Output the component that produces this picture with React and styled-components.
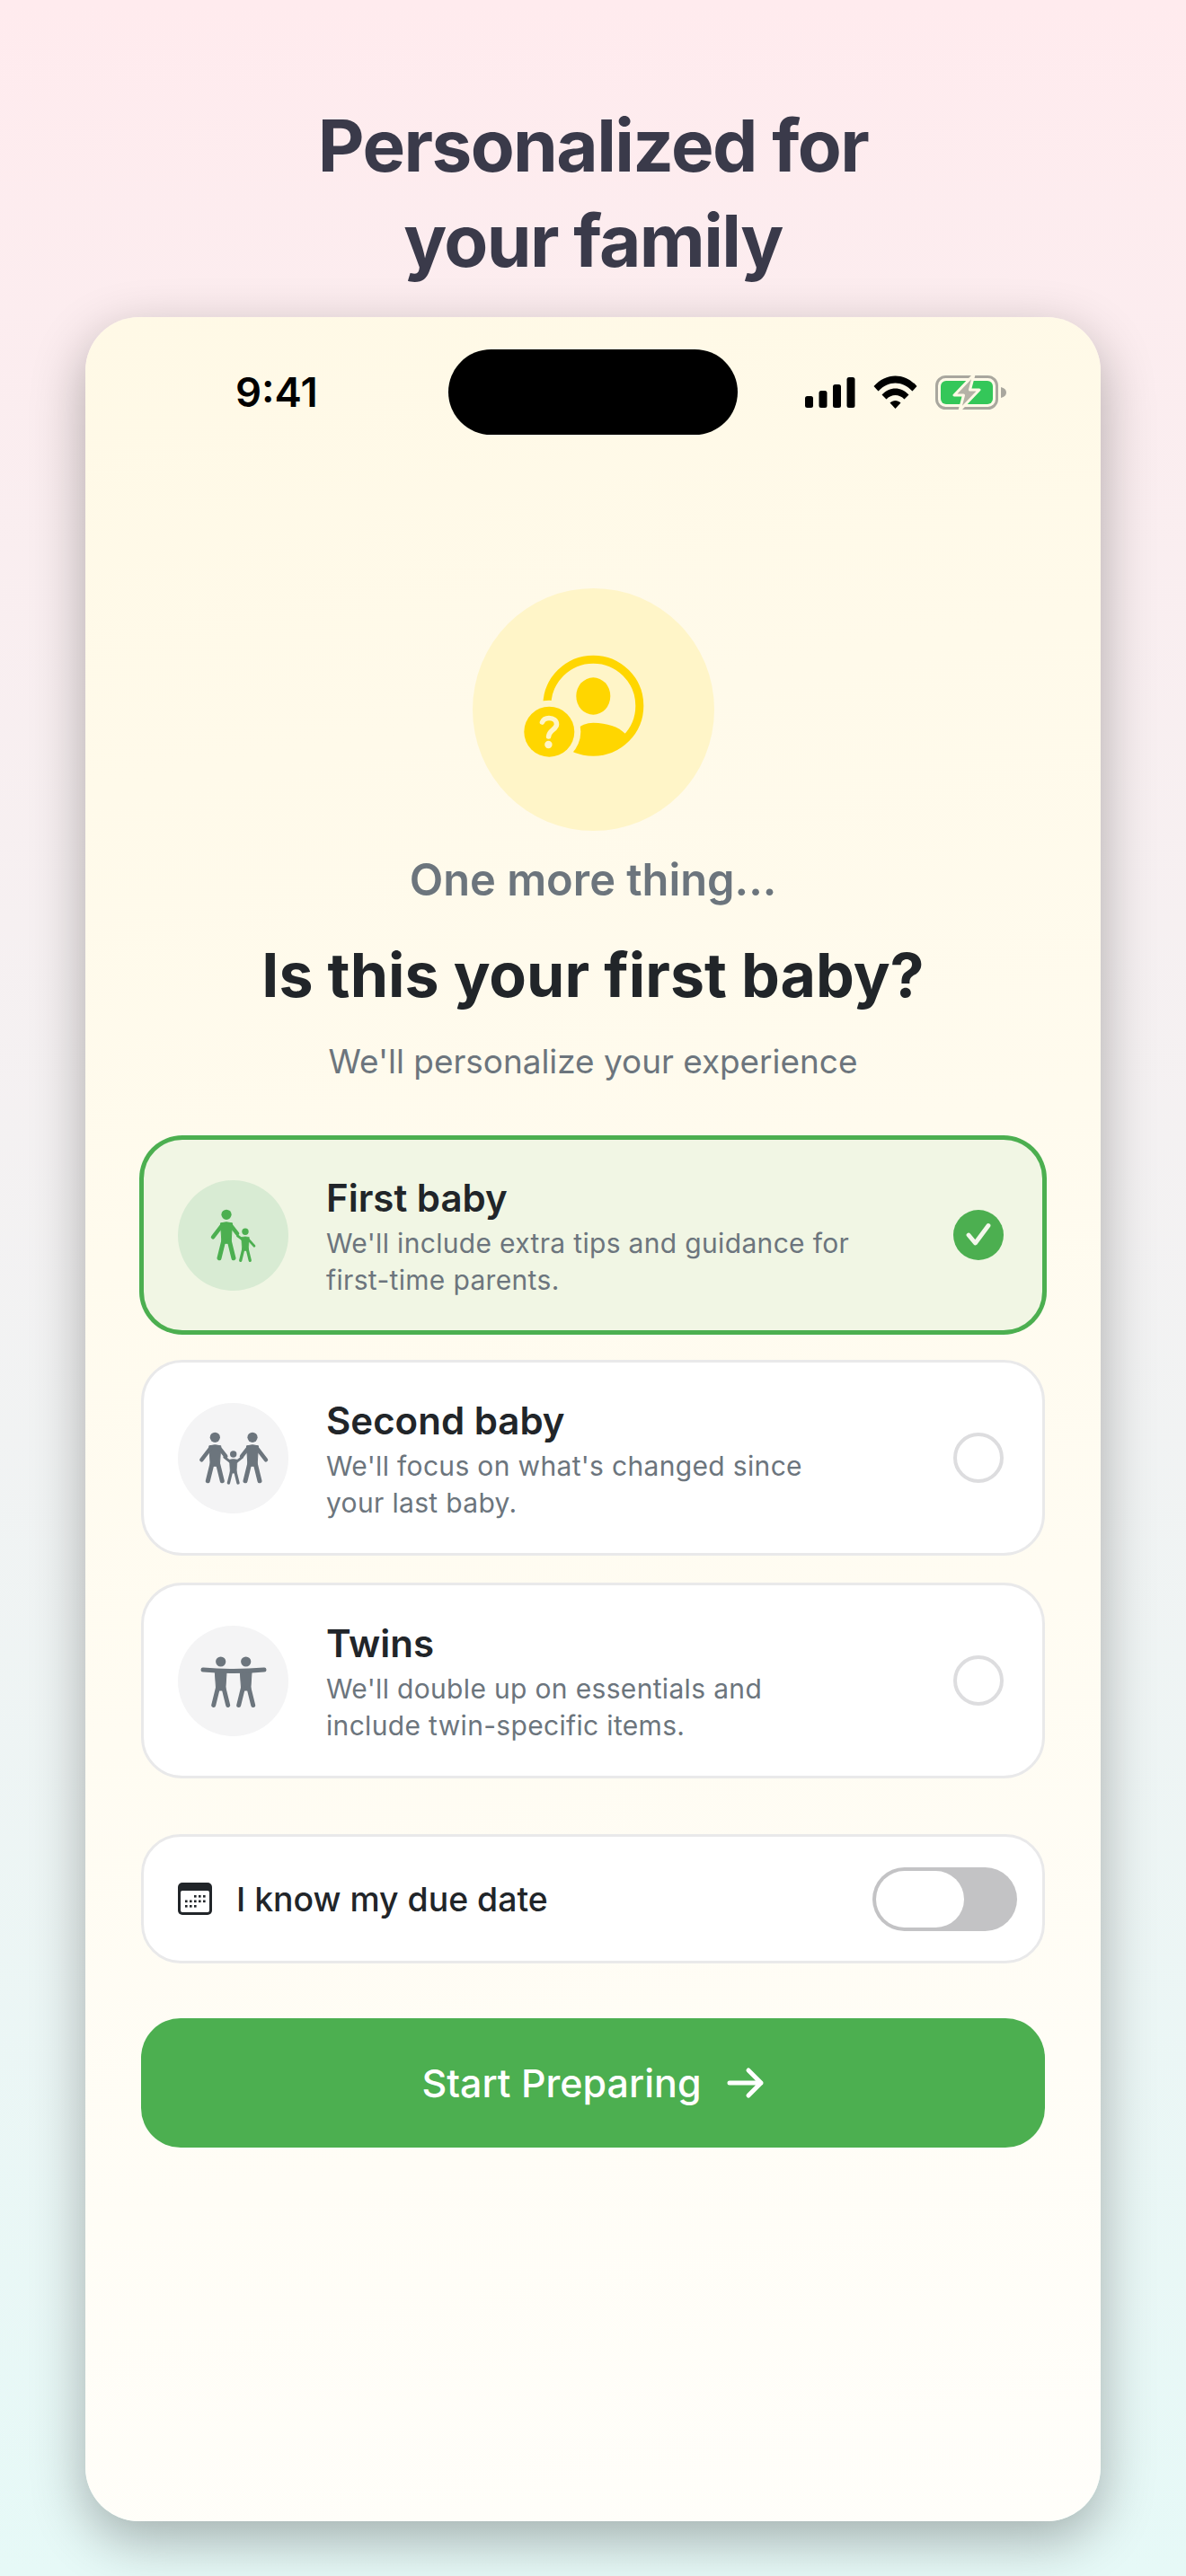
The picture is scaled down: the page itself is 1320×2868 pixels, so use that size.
import React from "react";
import styled, { createGlobalStyle } from "styled-components";

const Global = createGlobalStyle`
  html, body { margin: 0; padding: 0; }
  body { font-family: Inter, "Noto Sans", sans-serif; -webkit-font-smoothing: antialiased; }
  * { box-sizing: border-box; }
`;

const Page = styled.div`
  width: 1320px;
  height: 2868px;
  overflow: hidden;
  background: linear-gradient(180deg, #ffebee 0%, #e6f9f7 100%);
  display: flex;
  flex-direction: column;
  align-items: center;
  padding-top: 109px;
`;
const Headline = styled.h1`
  margin: 0 0 32px;
  font-size: 80px;
  line-height: 106px;
  font-weight: 700;
  letter-spacing: -1.6px;
  color: #3a3a4a;
  text-align: center;
`;
const Phone = styled.div`
  width: 1130px;
  height: 2454px;
  border-radius: 60px;
  background: linear-gradient(170deg, #fff9e6 0%, #fffefa 100%);
  box-shadow: 0 20px 60px rgba(0, 0, 0, 0.3);
  display: flex;
  flex-direction: column;
  align-items: center;
  padding: 36px 62px 0;
`;
const StatusBar = styled.div`
  width: 100%;
  height: 95px;
  display: grid;
  grid-template-columns: 1fr 322px 1fr;
  align-items: center;
`;
const Time = styled.div`
  font-size: 45.5px;
  font-weight: 600;
  color: #000;
  padding-left: 105px;
`;
const Island = styled.div`
  height: 95px;
  background: #000;
  border-radius: 48px;
`;
const StatusIcons = styled.div`
  display: flex;
  justify-content: flex-end;
  align-items: center;
  gap: 20px;
  padding-right: 42px;
`;
const Hero = styled.div`
  width: 269px;
  height: 270px;
  margin-top: 171px;
  border-radius: 50%;
  background: #fff5c8;
  flex: none;
`;
const Eyebrow = styled.div`
  margin-top: 23px;
  font-size: 48.8px;
  line-height: 64px;
  font-weight: 600;
  color: #6c757d;
`;
const Title = styled.h2`
  margin: 31px 0 0;
  font-size: 68px;
  line-height: 84px;
  font-weight: 700;
  color: #212529;
`;
const Subtitle = styled.p`
  margin: 30px 0 0;
  font-size: 36.9px;
  line-height: 50px;
  color: #6c757d;
`;
const Options = styled.div`
  width: 100%;
  margin-top: 59px;
  display: flex;
  flex-direction: column;
  gap: 30px;
`;
const Option = styled.div`
  height: 218px;
  display: flex;
  align-items: center;
  padding: 0 43px 0 38px;
  border-radius: 46px;
  border: 3px solid ${(p) => (p.$selected ? "#4caf50" : "#e9e9ea")};
  box-shadow: ${(p) => (p.$selected ? "0 0 0 2px #4caf50" : "none")};
  background: ${(p) => (p.$selected ? "#f1f6e4" : "#fff")};
`;
const IconCircle = styled.div`
  width: 123px;
  height: 123px;
  border-radius: 50%;
  flex: none;
  background: ${(p) => (p.$selected ? "#d8ebd3" : "#f4f4f5")};
`;
const OptionText = styled.div`
  flex: 1;
  margin-left: 42px;
  padding-top: 4px;
`;
const OptionTitle = styled.div`
  font-size: 42px;
  line-height: 50px;
  font-weight: 600;
  color: #212529;
`;
const OptionDesc = styled.div`
  margin-top: 5px;
  font-size: 30px;
  line-height: 41px;
  color: #6c757d;
  letter-spacing: 0.33px;
  max-width: 590px;
`;
const Radio = styled.div`
  width: 56px;
  height: 56px;
  border-radius: 50%;
  flex: none;
  display: flex;
  align-items: center;
  justify-content: center;
  border: ${(p) => (p.$selected ? "none" : "4px solid #dddddf")};
  background: ${(p) => (p.$selected ? "#4caf50" : "transparent")};
`;
const DueRow = styled.div`
  width: 100%;
  height: 144px;
  margin-top: 62px;
  display: flex;
  align-items: center;
  padding: 0 28px 0 38px;
  border-radius: 44px;
  border: 3px solid #e9e9ea;
  background: #fff;
`;
const DueLabel = styled.div`
  flex: 1;
  margin-left: 27px;
  font-size: 37.4px;
  font-weight: 500;
  color: #212529;
`;
const Toggle = styled.div`
  width: 161px;
  height: 71px;
  border-radius: 36px;
  background: #c3c3c5;
  padding: 4px;
`;
const Knob = styled.div`
  width: 98px;
  height: 63px;
  border-radius: 32px;
  background: #fff;
`;
const CTA = styled.div`
  width: 100%;
  height: 144px;
  margin-top: 61px;
  border-radius: 44px;
  background: #4caf50;
  display: flex;
  align-items: center;
  justify-content: center;
  gap: 28px;
  color: #fff;
  font-size: 43px;
  font-weight: 500;
`;

const Person = ({ x, y, s = 1, color, arms = [] }) => (
  <g transform={`translate(${x} ${y}) scale(${s})`}>
    <circle cx="0" cy="0" r="5.6" fill={color} />
    <path d="M-6.5 9.5 Q0 7.5 6.5 9.5 L5 32 L-5 32 Z" fill={color} stroke={color} strokeWidth="1" strokeLinejoin="round" />
    <path d="M-3.2 29 L-8 48.5 M3.2 29 L8 48.5" stroke={color} strokeWidth="5" strokeLinecap="round" fill="none" />
    {arms.map((d, i) => (
      <path key={i} d={d} stroke={color} strokeWidth="4.4" strokeLinecap="round" strokeLinejoin="round" fill="none" />
    ))}
  </g>
);

const FirstBabyIcon = ({ color }) => (
  <svg width="123" height="123" viewBox="0 0 123 123">
    <Person x={54} y={38.3} color={color} arms={["M-5 12 L-15 25", "M5 12 L12 21"]} />
    <Person x={75} y={57.3} s={0.66} color={color} arms={["M-5 13 L-13 7", "M5 13 L15 24"]} />
  </svg>
);
const SecondBabyIcon = ({ color }) => (
  <svg width="123" height="123" viewBox="0 0 123 123">
    <Person x={41.3} y={38.3} color={color} arms={["M-5 12 L-15 25", "M5 12 L12 21"]} />
    <Person x={83} y={38.3} color={color} arms={["M5 12 L15 25", "M-5 12 L-12 21"]} />
    <Person x={61.7} y={57} s={0.66} color={color} arms={["M-5 13 L-15 5", "M5 13 L15 5"]} />
  </svg>
);
const TwinsIcon = ({ color }) => (
  <svg width="123" height="123" viewBox="0 0 123 123">
    <Person x={47.7} y={40} color={color} />
    <Person x={75.7} y={40} color={color} />
    <path d="M28 49 Q62 52 96 49" stroke={color} strokeWidth="5" strokeLinecap="round" fill="none" />
  </svg>
);

const HeroIcon = () => (
  <svg width="269" height="270" viewBox="0 0 269 270">
    <defs>
      <mask id="gap">
        <rect width="269" height="270" fill="#fff" />
        <circle cx="85.3" cy="159.7" r="35" fill="#000" />
      </mask>
      <clipPath id="ringClip">
        <circle cx="134.3" cy="130.7" r="55" />
      </clipPath>
    </defs>
    <g mask="url(#gap)">
      <circle cx="134.3" cy="130.7" r="51.5" fill="none" stroke="#ffd600" strokeWidth="9" />
      <g clipPath="url(#ringClip)">
        <path d="M100 195 C104 162 118 150 134.3 149.7 C150 150 162 154 169.5 161.5 L180 200 L100 200 Z" fill="#ffd600" />
      </g>
    </g>
    <ellipse cx="134.3" cy="120" rx="19" ry="20.7" fill="#ffd600" />
    <circle cx="85.3" cy="159.7" r="28" fill="#ffd600" />
    <path d="M77.5 149 C79 145.5 82 144.5 85 144.5 C90 144.5 93.5 147.5 93.5 151.5 C93.5 157 85.2 158 84.6 165" fill="none" stroke="#fff5c8" strokeWidth="5.6" strokeLinecap="round" />
    <circle cx="84.4" cy="174" r="4.2" fill="#fff5c8" />
  </svg>
);

const Check = () => (
  <svg width="28" height="28" viewBox="0 0 28 28">
    <path d="M3 14 L10.5 23 L25 3.5" fill="none" stroke="#f4f8ec" strokeWidth="4.8" strokeLinecap="round" strokeLinejoin="round" />
  </svg>
);

const Signal = () => (
  <svg width="56" height="34" viewBox="0 0 56 34">
    <rect x="0" y="21" width="9" height="13" rx="2.5" />
    <rect x="15.5" y="15" width="9" height="19" rx="2.5" />
    <rect x="31" y="8" width="9" height="26" rx="2.5" />
    <rect x="46.5" y="0" width="9" height="34" rx="2.5" />
  </svg>
);
const Wifi = () => (
  <svg width="49" height="37" viewBox="0 0 49 37">
    <path d="M0.5 12 C14 -3.5 35 -3.5 48.5 12 L43.5 17.5 C32 5.5 17 5.5 5.5 17.5 Z" />
    <path d="M9.5 21.5 C18 12 31 12 39.5 21.5 L34.5 26.5 C29 20.5 20 20.5 14.5 26.5 Z" />
    <path d="M18.5 30.5 C22 27 27 27 30.5 30.5 L24.5 37 Z" />
  </svg>
);
const Battery = () => (
  <svg width="80" height="38" viewBox="0 0 80 38">
    <rect x="1.5" y="1.5" width="67" height="35" rx="10" fill="none" stroke="#a9a79e" strokeWidth="3" />
    <rect x="6" y="6" width="58" height="26" rx="6" fill="#34c759" />
    <path d="M73 13 C77 14 79 16 79 19 C79 22 77 24 73 25 Z" fill="#a9a79e" />
    <path d="M43 -1 L21 22 L31.5 22 L27 39 L49 16 L38.5 16 Z" fill="#b4b2a6" stroke="#fff9e6" strokeWidth="3" strokeLinejoin="round" />
  </svg>
);
const Calendar = () => (
  <svg width="38" height="36" viewBox="0 0 38 36">
    <rect x="0" y="0" width="38" height="36" rx="5" fill="#212529" />
    <rect x="3" y="9" width="32" height="24" rx="2" fill="#fff" />
    {[0, 1, 2].map((r) =>
      [0, 1, 2, 3, 4].map((c) =>
        (r === 0 && c < 2) || (r === 2 && c > 2) ? null : (
          <rect key={`${r}-${c}`} x={8 + c * 5} y={14 + r * 5.5} width="2.6" height="2.6" fill="#212529" />
        )
      )
    )}
  </svg>
);
const Arrow = () => (
  <svg width="42" height="36" viewBox="0 0 42 36">
    <path d="M3 18 H38 M24 4 L38 18 L24 32" fill="none" stroke="#fff" strokeWidth="5" strokeLinecap="round" strokeLinejoin="round" />
  </svg>
);

const options = [
  { title: "First baby", desc: "We'll include extra tips and guidance for first-time parents.", Icon: FirstBabyIcon, selected: true },
  { title: "Second baby", desc: "We'll focus on what's changed since your last baby.", Icon: SecondBabyIcon },
  { title: "Twins", desc: "We'll double up on essentials and include twin-specific items.", Icon: TwinsIcon },
];

export default function App() {
  return (
    <Page>
      <Global />
      <Headline>
        Personalized for
        <br />
        your family
      </Headline>
      <Phone>
        <StatusBar>
          <Time>9:41</Time>
          <Island />
          <StatusIcons>
            <Signal />
            <Wifi />
            <Battery />
          </StatusIcons>
        </StatusBar>
        <Hero>
          <HeroIcon />
        </Hero>
        <Eyebrow>One more thing...</Eyebrow>
        <Title>Is this your first baby?</Title>
        <Subtitle>We'll personalize your experience</Subtitle>
        <Options>
          {options.map(({ title, desc, Icon, selected }) => (
            <Option key={title} $selected={selected}>
              <IconCircle $selected={selected}>
                <Icon color={selected ? "#4caf50" : "#6c757d"} />
              </IconCircle>
              <OptionText>
                <OptionTitle>{title}</OptionTitle>
                <OptionDesc>{desc}</OptionDesc>
              </OptionText>
              <Radio $selected={selected}>{selected && <Check />}</Radio>
            </Option>
          ))}
        </Options>
        <DueRow>
          <Calendar />
          <DueLabel>I know my due date</DueLabel>
          <Toggle>
            <Knob />
          </Toggle>
        </DueRow>
        <CTA>
          Start Preparing
          <Arrow />
        </CTA>
      </Phone>
    </Page>
  );
}
